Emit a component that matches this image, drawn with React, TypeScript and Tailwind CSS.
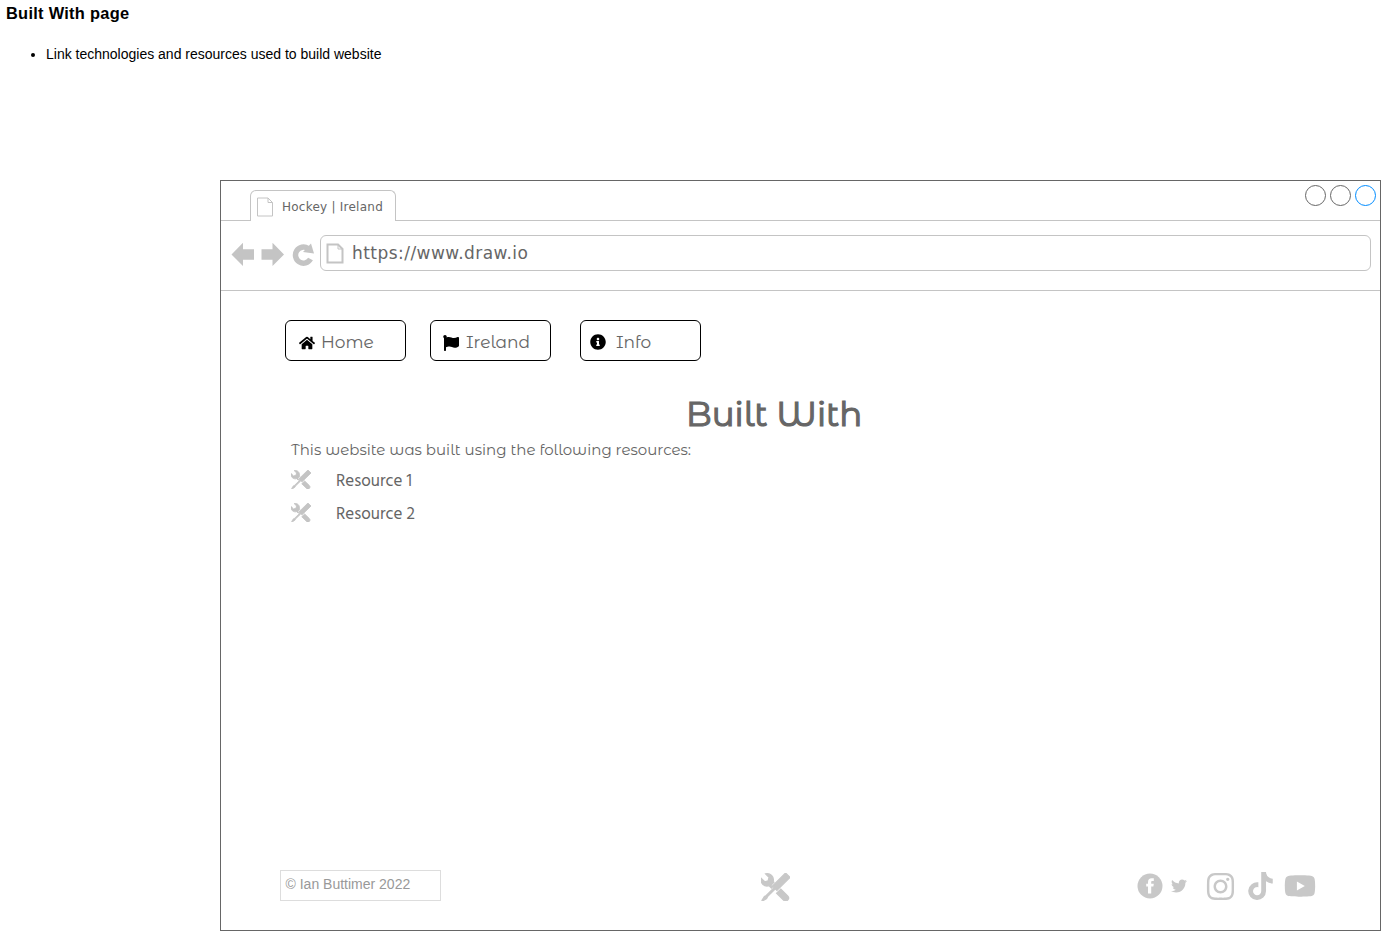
import type { ReactNode } from "react";
import { FaHome, FaFlag, FaInfoCircle, FaTwitter, FaInstagram, FaTiktok, FaYoutube } from "react-icons/fa";

function Tools({ className }: { className: string }) {
  return (
    <svg viewBox="0 0 16 16" className={className} fill="currentColor" preserveAspectRatio="none">
      <path stroke="currentColor" strokeWidth="0.7" d="M4.48 7.27c.26.26 1.28 1.33 1.28 1.33l.56-.58-.88-.91 1.69-1.8s-.76-.74-.43-.45c.32-1.19.03-2.51-.87-3.44C4.93.5 3.66.2 2.52.51l1.93 2-.51 1.96-1.89.52-1.93-1.99C-.19 4.17.1 5.48 1 6.4c.94.98 2.29 1.26 3.48.87zm6.44 1.94l-2.33 2.3 3.84 3.98c.31.33.73.49 1.14.49.41 0 .82-.16 1.14-.49.63-.65.63-1.7 0-2.35l-3.79-3.93zM16 2.53L13.55 0 6.33 7.46l.88.91-4.31 4.46-.99.53-1.39 2.27.35.37 2.2-1.44.51-1.02L7.9 9.08l.88.91L16 2.53z" />
    </svg>
  );
}

function Facebook({ className }: { className: string }) {
  return (
    <svg viewBox="0 0 26 26" className={className}>
      <circle cx="13" cy="13" r="12.500" fill="currentColor" />
      <path fill="#fff" d="M11 20.500V13.500H9.200V10.800H11V9.200C11 6.500 12.300 5.300 14.600 5.300H16.800V8H15.300C14.500 8 14.200 8.400 14.200 9.100V10.800H16.800L16.400 13.500H14.200V20.500z" />
    </svg>
  );
}

function PageIcon({ className, stroke }: { className: string; stroke: number }) {
  return (
    <svg viewBox="0 0 18 20" className={className} fill="none" stroke="#c4c4c4" strokeWidth={stroke}>
      <path d="M1.500 1H12l4.500 4.500V19h-15z" />
      <path d="M12 1v4.500h4.500" strokeWidth="1" />
    </svg>
  );
}

function NavButton({ children, className }: { children: ReactNode; className: string }) {
  return (
    <button className={`flex h-[41px] w-[121px] items-center rounded-md border border-black font-['Montserrat_Alternates','Lato',sans-serif] text-[17px] text-[#666] ${className}`}>
      {children}
    </button>
  );
}

export default function App() {
  return (
    <div className="flex h-[931px] w-[1381px] flex-col overflow-hidden bg-white font-['Liberation_Sans',sans-serif] text-black">
      <header className="h-[180px] pl-1.5">
        <h1 className="pt-px text-[16.400px] leading-6 font-bold tracking-[0.280px]">Built With page</h1>
        <ul className="mt-[19px] list-disc pl-10 text-[14px] leading-5">
          <li>Link technologies and resources used to build website</li>
        </ul>
      </header>
      <main className="ml-[220px] flex h-[751px] w-[1161px] flex-col border border-[#666]">
        <div className="flex h-10 items-stretch font-['Verdana','DejaVu_Sans',sans-serif]">
          <div className="w-[29px] border-b border-[#c4c4c4]" />
          <div className="mt-[9px] flex w-[146px] items-center rounded-t-md border border-b-0 border-[#c4c4c4] pl-[5px] text-[12px] text-[#666]">
            <PageIcon className="mt-0.5 h-5 w-[18px]" stroke={1} />
            <span className="mt-0.5 ml-2 tracking-[0.240px] whitespace-nowrap">Hockey | Ireland</span>
          </div>
          <div className="flex flex-1 justify-end gap-1 border-b border-[#c4c4c4] pt-1 pr-[4px]">
            <span className="size-[21px] rounded-full border border-[#666]" />
            <span className="size-[21px] rounded-full border border-[#666]" />
            <span className="size-[21px] rounded-full border border-[#008cff]" />
          </div>
        </div>
        <div className="flex h-[70px] items-start border-b border-[#c4c4c4] pt-[14px] pl-[10px] font-['Verdana','DejaVu_Sans',sans-serif]">
          <svg className="mt-[7px] h-6 w-[84px]" viewBox="0 0 84 24" fill="#c4c4c4">
            <path d="M0.500 12.500 12 0.800v6.500h11v10.500H12V24zM53 12.500 41.500 0.800v6.500H30.500v10.500h11V24z" />
            <path d="M77 6.500A8 8 0 1 0 79.500 17" fill="none" stroke="#c4c4c4" strokeWidth="5.500" />
            <path d="M80 1.500 83 11.500 72 10z" />
          </svg>
          <div className="ml-[5px] flex h-9 w-[1051px] items-center rounded-md border border-[#c4c4c4] pl-[5px] text-[17px] text-[#666]">
            <PageIcon className="h-[21px] w-[18px]" stroke={2} />
            <span className="mt-0.5 ml-2 tracking-[0.460px]">https://www.draw.io</span>
          </div>
        </div>
        <nav className="flex pt-[29px] pl-16">
          <NavButton className="pl-[13px]"><FaHome className="mt-1 mr-1.5 size-4 text-black" /><span className="pt-[5px]">Home</span></NavButton>
          <NavButton className="ml-6 pl-3"><FaFlag className="mt-1 mr-[7px] size-4 text-black" /><span className="pt-[5px]">Ireland</span></NavButton>
          <NavButton className="ml-[29px] pl-[9px]"><FaInfoCircle className="mt-0.5 mr-2.5 size-4 text-black" /><span className="pt-[5px]">Info</span></NavButton>
        </nav>
        <h2 className="mt-[29px] ml-[465px] h-12 font-['Montserrat_Alternates','Lato',sans-serif] text-[34px] leading-[49px] font-normal whitespace-nowrap text-[#666] [-webkit-text-stroke:1.200px_#666]">Built With</h2>
        <p className="ml-[70px] h-6 font-['Montserrat_Alternates','Lato',sans-serif] text-[15px] leading-6 text-[#666]">This website was built using the following resources:</p>
        <ul className="mt-px pl-[69.500px] font-['Hind','Noto_Sans',sans-serif] text-[17px] text-[#666]">
          <li className="flex h-[33px] items-center"><Tools className="h-[19px] w-5 text-[#c4c4c4]" /><span className="mt-[5px] ml-[25.500px]">Resource 1</span></li>
          <li className="flex h-[33px] items-center"><Tools className="h-[19px] w-5 text-[#c4c4c4]" /><span className="mt-[5px] ml-[25.500px]">Resource 2</span></li>
        </ul>
        <footer className="mt-auto flex h-[60px] items-start pl-[59px] text-[#c8c8c8]">
          <div className="h-[31px] w-[161px] border border-[#ddd] pl-[4.500px] text-[14px] leading-[26px] text-[#999]">© Ian Buttimer 2022</div>
          <Tools className="mt-[3px] ml-[320px] h-7 w-[29px]" />
          <div className="ml-[346.500px] flex h-8 items-center">
            <Facebook className="size-[26px]" />
            <FaTwitter className="ml-[8.500px] size-4" />
            <FaInstagram className="ml-[17.500px] size-[31px]" />
            <FaTiktok className="ml-3 h-7 w-[25px]" />
            <FaYoutube className="ml-[11.500px] h-8 w-8" />
          </div>
        </footer>
      </main>
    </div>
  );
}
